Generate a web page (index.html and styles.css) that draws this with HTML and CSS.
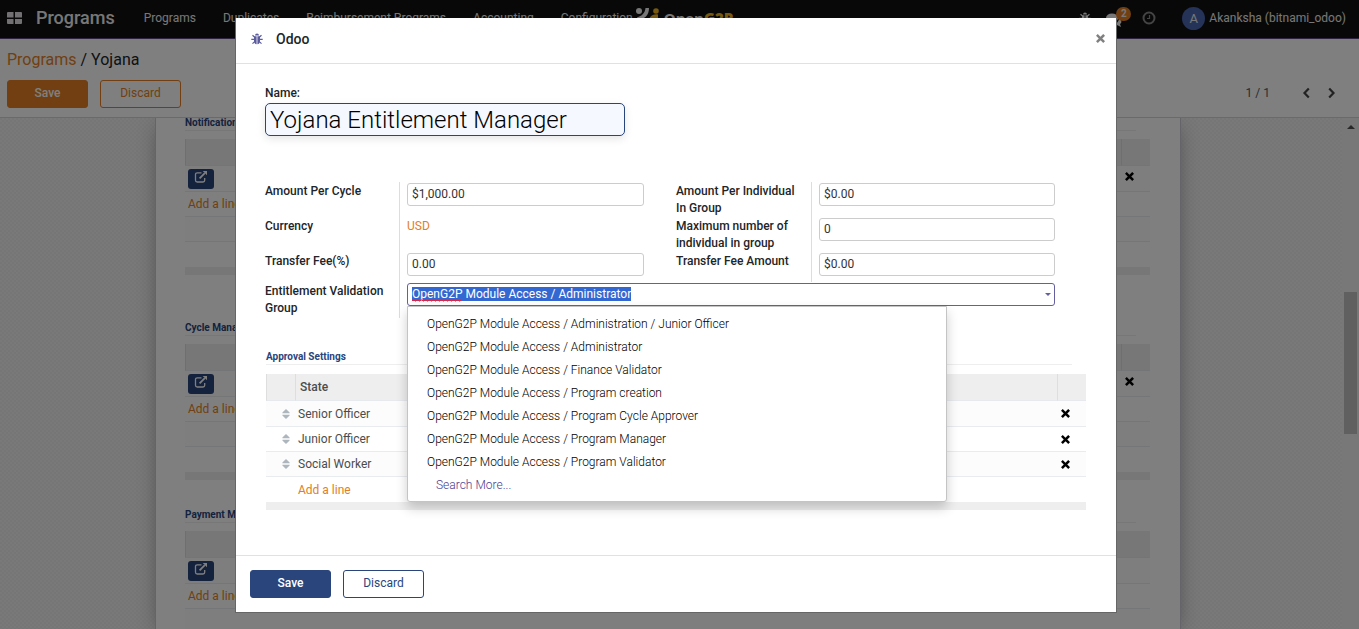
FILE: index.html
```html
<!DOCTYPE html>
<html lang="en">
<head>
<meta charset="utf-8">
<title>Odoo - Yojana</title>
<link rel="stylesheet" href="styles.css">
</head>
<body>
<svg class="sprite" aria-hidden="true">
  <symbol id="bug" viewBox="0 0 12 12">
    <path d="M4 2.600a2 2 0 0 1 4 0z"/>
    <path d="M3 3.300h2.600v8C4 11.300 3 9.800 3 8zM6.400 3.300H9V8c0 1.800-1 3.300-2.600 3.300z"/>
    <path d="M1.500 2.200l2 1.800M10.500 2.200l-2 1.800M.3 6.400h3M11.700 6.400h-3M1.500 10.600l2.200-2M10.500 10.600l-2.200-2" fill="none" stroke="currentColor" stroke-width="1.200"/>
  </symbol>
  <symbol id="times" viewBox="0 0 10 10">
    <path d="M2 2l6 6M8 2L2 8" fill="none" stroke="currentColor" stroke-width="2.800" stroke-linecap="square"/>
  </symbol>
  <symbol id="external" viewBox="0 0 14 12">
    <path d="M7.500 1.800H3.200A1.700 1.700 0 0 0 1.500 3.500v5.800A1.700 1.700 0 0 0 3.200 11h5.800a1.700 1.700 0 0 0 1.700-1.700V7" fill="none" stroke="currentColor" stroke-width="1.300"/>
    <path d="M5.600 7.300l5.200-5.200" stroke="currentColor" stroke-width="1.800"/>
    <path d="M8.700 0H13v4.300z"/>
  </symbol>
  <symbol id="sort" viewBox="0 0 8 10">
    <path d="M4 0l3.600 3.500v.7H.4v-.7zM4 10L.4 6.500v-.7h7.200v.7z"/>
  </symbol>
  <symbol id="chevron" viewBox="0 0 8 12">
    <path d="M6.300 1.500L2 6l4.300 4.500" fill="none" stroke="currentColor" stroke-width="2.200"/>
  </symbol>
</svg>

<div class="app">
  <header class="navbar">
    <button class="apps" aria-label="Home menu"><svg viewBox="0 0 15 12"><path d="M0 1a1 1 0 0 1 1-1h5.500v5.500H0zM8 0h6a1 1 0 0 1 1 1v4.500H8zM0 7h6.500v5H1a1 1 0 0 1-1-1zM8 7h7v4a1 1 0 0 1-1 1H8z"/></svg></button>
    <a class="brand" href="#">Programs</a>
    <nav class="menu">
      <a href="#">Programs</a>
      <a href="#">Duplicates</a>
      <a href="#">Reimbursement Programs</a>
      <a href="#">Accounting</a>
      <a href="#">Configuration</a>
    </nav>
    <a class="logo" href="#">
      <svg viewBox="0 0 24 20" aria-hidden="true"><circle cx="3" cy="3" r="3" fill="#eee"/><path d="M9.500 0H13c0 7-4 11-12 13V9.500C6 8 9 5 9.500 0z" fill="#eee"/><circle cx="20" cy="3" r="2.800" fill="#eeb41e"/><path d="M22 10V6.500c-6-1-10 3-10 10h4c0-4 2-6 6-6.500z" fill="#eeb41e"/></svg>
      <span>Open<b>G2P</b></span>
    </a>
    <div class="tray">
      <button aria-label="Debug"><svg class="tray-bug"><use href="#bug"/></svg></button>
      <button class="messages" aria-label="Messages"><svg viewBox="0 0 16 14"><ellipse cx="6" cy="5" rx="6" ry="4.500"/><path d="M2 8l-1 4 4-3zM13 5c3 2 3 5 1 6l1 3-4-2-4-1c4 0 6-3 6-6z"/></svg><span class="badge">2</span></button>
      <button class="activities" aria-label="Activities"><svg viewBox="0 0 14 14"><circle cx="7" cy="7" r="5.500" stroke-width="2"/><path d="M7.500 4v3.500H5" stroke-width="1.200"/></svg></button>
      <button class="user"><span class="avatar">A</span>Akanksha (bitnami_odoo)</button>
    </div>
  </header>

  <section class="control-panel">
    <div class="crumbs"><a href="#">Programs</a> / Yojana</div>
    <div class="actions">
      <div class="buttons page-buttons"><button class="btn btn-fill">Save</button><button class="btn">Discard</button></div>
      <div class="pager"><span>1 / 1</span>
        <button aria-label="Previous"><svg><use href="#chevron"/></svg></button>
        <button aria-label="Next"><svg class="flip"><use href="#chevron"/></svg></button>
      </div>
    </div>
  </section>

  <main class="content">
    <div class="canvas">
      <div class="sheet">
        <section class="managers spaced">
          <h2 class="heading">Notification Managers</h2>
          <table class="list">
            <thead><tr><th></th><th class="end"></th></tr></thead>
            <tbody>
              <tr><td><button class="open" aria-label="Open"><svg><use href="#external"/></svg></button></td><td class="end"><button class="remove" aria-label="Delete"><svg><use href="#times"/></svg></button></td></tr>
              <tr><td colspan="2"><a href="#">Add a line</a></td></tr>
              <tr><td colspan="2"></td></tr>
              <tr><td colspan="2"></td></tr>
            </tbody>
            <tfoot><tr><td colspan="2"></td></tr></tfoot>
          </table>
        </section>
        <section class="managers">
          <h2 class="heading">Cycle Managers</h2>
          <table class="list">
            <thead><tr><th></th><th class="end"></th></tr></thead>
            <tbody>
              <tr><td><button class="open" aria-label="Open"><svg><use href="#external"/></svg></button></td><td class="end"><button class="remove" aria-label="Delete"><svg><use href="#times"/></svg></button></td></tr>
              <tr><td colspan="2"><a href="#">Add a line</a></td></tr>
              <tr><td colspan="2"></td></tr>
              <tr><td colspan="2"></td></tr>
            </tbody>
            <tfoot><tr><td colspan="2"></td></tr></tfoot>
          </table>
        </section>
        <section class="managers payment">
          <h2 class="heading">Payment Managers</h2>
          <table class="list">
            <thead><tr><th></th></tr></thead>
            <tbody>
              <tr><td><button class="open" aria-label="Open"><svg><use href="#external"/></svg></button></td></tr>
              <tr><td><a href="#">Add a line</a></td></tr>
              <tr><td></td></tr>
            </tbody>
          </table>
        </section>
      </div>
    </div>
    <div class="scrollbar" aria-hidden="true"><span class="arrow"></span><span class="thumb"></span></div>
  </main>
</div>

<div class="backdrop">
  <div class="modal" role="dialog" aria-modal="true" aria-labelledby="title">
    <header class="modal-head">
      <svg class="debug"><use href="#bug"/></svg>
      <h1 id="title">Odoo</h1>
      <button class="close" aria-label="Close"><svg><use href="#times"/></svg></button>
    </header>
    <div class="modal-body">
      <label class="name-label" for="name">Name:</label>
      <input class="name" id="name" value="Yojana Entitlement Manager">

      <div class="groups">
        <div class="group">
          <div class="row"><label for="cycle">Amount Per Cycle</label><div class="value"><input id="cycle" value="$1,000.00"></div></div>
          <div class="row"><span class="label">Currency</span><div class="value"><a href="#">USD</a></div></div>
          <div class="row short"><label for="fee">Transfer Fee(%)</label><div class="value"><input id="fee" value="0.00"></div></div>
        </div>
        <div class="group">
          <div class="row"><label for="individual">Amount Per Individual In Group</label><div class="value"><input id="individual" value="$0.00"></div></div>
          <div class="row"><label for="maximum">Maximum number of individual in group</label><div class="value"><input id="maximum" value="0"></div></div>
          <div class="row short"><label for="feeamount">Transfer Fee Amount</label><div class="value"><input id="feeamount" value="$0.00"></div></div>
        </div>
      </div>
      <div class="row wide">
        <label for="validation">Entitlement Validation Group</label>
        <div class="value combo">
          <input id="validation" role="combobox" aria-expanded="true" aria-controls="options" value="OpenG2P Module Access / Administrator">
          <span class="caret"></span>
          <svg class="squiggle" aria-hidden="true"><defs><pattern id="wave" width="4" height="3" patternUnits="userSpaceOnUse"><path d="M0 2l1-1h1l1 1h1" fill="none" stroke="#e0203c"/></pattern></defs><rect width="100%" height="3" fill="url(#wave)"/></svg>
          <ul class="options" id="options" role="listbox">
            <li role="option">OpenG2P Module Access / Administration / Junior Officer</li>
            <li role="option">OpenG2P Module Access / Administrator</li>
            <li role="option">OpenG2P Module Access / Finance Validator</li>
            <li role="option">OpenG2P Module Access / Program creation</li>
            <li role="option">OpenG2P Module Access / Program Cycle Approver</li>
            <li role="option">OpenG2P Module Access / Program Manager</li>
            <li role="option">OpenG2P Module Access / Program Validator</li>
            <li role="option" class="more">Search More...</li>
          </ul>
        </div>
      </div>

      <section class="approval">
        <h2 class="heading">Approval Settings</h2>
        <table class="list">
          <thead><tr><th class="handle"></th><th>State</th><th class="end"></th></tr></thead>
          <tbody>
            <tr><td class="handle"><svg class="sort"><use href="#sort"/></svg></td><td>Senior Officer</td><td class="end"><button class="remove" aria-label="Delete"><svg><use href="#times"/></svg></button></td></tr>
            <tr><td class="handle"><svg class="sort"><use href="#sort"/></svg></td><td>Junior Officer</td><td class="end"><button class="remove" aria-label="Delete"><svg><use href="#times"/></svg></button></td></tr>
            <tr><td class="handle"><svg class="sort"><use href="#sort"/></svg></td><td>Social Worker</td><td class="end"><button class="remove" aria-label="Delete"><svg><use href="#times"/></svg></button></td></tr>
            <tr><td class="handle"></td><td colspan="2"><a href="#">Add a line</a></td></tr>
          </tbody>
          <tfoot><tr><td colspan="3"></td></tr></tfoot>
        </table>
      </section>
    </div>
    <footer class="modal-foot buttons"><button class="btn btn-fill">Save</button><button class="btn">Discard</button></footer>
  </div>
</div>
<script src="main.js"></script>
</body>
</html>
```
FILE: main.js
```js
const field = document.getElementById('validation');
field.focus({ preventScroll: true });
field.select();
```
FILE: styles.css
```css
* { box-sizing: border-box; }
body {
  margin: 0;
  overflow: hidden;
  font: 12px/18px Roboto, "Liberation Sans", sans-serif;
  color: #4c4c4c;
}
a { color: #e27e24; text-decoration: none; }
button { font: inherit; color: inherit; background: none; border: 0; padding: 0; }
input { font: inherit; }
svg { display: block; fill: currentColor; }
.sprite { position: absolute; width: 0; height: 0; }

.app { display: flex; flex-direction: column; height: 100vh; background: #fff; }

/* Top bar */
.navbar {
  display: flex;
  align-items: center;
  flex: none;
  height: 39px;
  padding: 0 13px 2px 7px;
  background: #111;
  border-bottom: 1px solid #5a4a80;
  color: #eee;
}
.navbar a { color: #eee; }
.apps svg { width: 15px; height: 12px; color: #e6e0e6; }
.navbar .brand { margin: 0 29px 0 14px; font-size: 18px; font-weight: 500; }
.menu { display: flex; gap: 27px; }
.logo { display: flex; align-items: flex-start; gap: 4px; margin-left: 3px; }
.logo svg { width: 24px; height: 20px; }
.logo span { font: 700 15px/20px "Open Sans", sans-serif; }
.navbar .logo b { color: #eeb41e; }
.tray { display: flex; align-items: center; margin-left: auto; }
.tray-bug { width: 12px; height: 12px; }
.messages { position: relative; margin-left: 15px; padding-top: 3px; }
.messages svg { width: 16px; height: 14px; }
.badge {
  position: absolute;
  left: 10px;
  top: -3px;
  width: 15px;
  border-radius: 8px;
  background: #e27e24;
  font-size: 10px;
  font-weight: 700;
  line-height: 14px;
}
.activities { margin: 0 26px 0 20px; color: #888; }
.activities svg { width: 14px; height: 14px; fill: none; stroke: currentColor; }
.user { display: flex; align-items: center; gap: 4px; }
.avatar { width: 23px; border-radius: 50%; background: #4a66b0; font-size: 13px; line-height: 23px; text-align: center; }

/* Control panel */
.control-panel { flex: none; height: 79px; padding: 10px 23px 9px 7px; border-bottom: 1px solid #d4d4d8; }
.crumbs { font-size: 16px; line-height: 21px; color: #212529; }
.actions { display: flex; justify-content: space-between; margin-top: 10px; }
.pager { display: flex; align-items: center; padding-bottom: 3px; color: #4c5a6c; }
.pager button { margin-left: 16px; color: #444; }
.pager span { margin-right: 16px; }
.pager svg { width: 9px; height: 12px; }
.flip { transform: scaleX(-1); }

.buttons { display: flex; gap: 12px; }
.btn { width: 81px; height: 28px; padding-bottom: 2px; border: 1px solid #29457c; border-radius: 3px; background: #fff; color: #29457c; }
.btn-fill { background: #29457c; color: #fff; font-weight: 500; }
.page-buttons .btn { border-color: #e27e24; color: #e27e24; }
.page-buttons .btn-fill { background: #e27e24; color: #fff; }

/* Page form */
.content { display: flex; flex: 1; min-height: 0; overflow: hidden; }
.canvas {
  flex: 1;
  padding: 0 161px 0 155px;
  background: repeating-conic-gradient(#f2f2f2 0 25%, #ececec 0 50%) 0 0 / 4px 4px;
}
.sheet { height: 100%; padding: 0 30px 0 29px; overflow: hidden; background: #fff; border: 1px solid #c8c8d2; border-width: 0 1px; box-shadow: 0 5px 20px -5px #888; }
.managers { margin-bottom: 30px; }
.managers.spaced { margin-bottom: 48px; }
.heading { margin: 0 14px 0 0; padding-bottom: 3px; border-bottom: 1px solid #eee; font-size: 10px; font-weight: 700; line-height: 9px; color: #29457c; white-space: nowrap; }

/* Lists */
.list { width: 100%; margin-top: 8px; border-collapse: separate; border-spacing: 0; }
.list th { height: 27px; padding: 0 4px; background: #eee; border-bottom: 1px solid #e6eaee; border-left: 1px solid #dedede; text-align: left; font-weight: 500; }
.list tbody td { height: 25px; padding: 0 3px; border-bottom: 1px solid #e9ecef; }
.list tbody tr:first-child td { height: 26px; }
.list tbody tr:last-child td { border-bottom: 0; }
.list tbody tr:nth-child(odd) td { background: #fcfcfc; }
.list tfoot td { height: 8px; padding: 0; background: #eee; }
.list .end { width: 29px; }
.list .handle { width: 29px; }
.open { display: block; padding: 2px 6px 6px; border-radius: 3px; background: #29457c; color: #fff; }
.open svg { width: 14px; height: 12px; }
.remove { display: block; padding: 0 1px; color: #000; }
.remove svg { width: 9px; height: 9px; }
.managers .remove { padding-bottom: 4px; }
.sort { width: 8px; height: 10px; margin-left: 13px; color: #adb5bd; }

/* Scrollbar */
.scrollbar { display: flex; flex-direction: column; align-items: center; width: 17px; background: #f1f1f1; }
.arrow { margin-top: 7px; border: 4px solid transparent; border-top: 0; border-bottom-color: #505050; }
.thumb { width: 13px; height: 142px; margin-top: 163px; background: #c1c1c1; }

/* Dialog */
.backdrop { position: fixed; inset: 0; padding: 18px 7px 0 0; background: rgba(0, 0, 0, .5); }
.modal { max-width: 882px; margin: 0 auto; background: #fff; background-clip: padding-box; border: 1px solid #666; border-top: 0; }
.modal-head { display: flex; align-items: center; height: 46px; padding: 0 11px 4px 15px; border-bottom: 1px solid #dee2e6; }
.debug { width: 12px; height: 12px; color: #5c5c9c; }
.modal-head h1 { margin: 0 auto 0 13px; font-size: 14px; font-weight: 500; color: #212529; }
.close { color: #808080; }
.close svg { width: 9px; height: 9px; }
.modal-body { padding: 20px 30px 45px 29px; }
.name-label { display: block; color: #212529; font-weight: 500; }
.name { display: block; width: 360px; height: 33px; margin-top: 1px; padding: 0 4px; border: 1px solid #29457c; border-radius: 5px; background: #f5f8ff; box-shadow: 0 3px 8px rgba(0, 0, 0, .1); color: #000; font-size: 24px; font-weight: 300; }

.groups { display: grid; grid-template-columns: 1fr 1fr; gap: 32px; margin: 46px 31px 0 0; }
.row { display: grid; grid-template-columns: 135px 1fr; height: 35px; }
.group + .group .row { grid-template-columns: 136px 1fr; }
.row.short { height: 30px; }
.row.wide { height: 36px; margin-right: 31px; }
.row > label, .row > .label { padding: 1px 8px 0 0; border-right: 1px solid #ddd; color: #212529; font-weight: 500; line-height: 17px; }
.value { padding: 1px 0 0 7px; line-height: 17px; }
.value input { display: block; width: 100%; height: 23px; padding: 0 4px 2px; border: 1px solid #ccc; border-radius: 3px; color: #333; outline: 0; }
.combo { position: relative; }
.combo input { border-color: #6460a0; }
.combo input::selection { background: #3367d1; color: #fff; }
.caret { position: absolute; right: 4px; top: 11px; border: 3px solid transparent; border-top-color: #6460a0; border-bottom: 0; }
.squiggle { position: absolute; left: 12px; top: 17px; width: 49px; height: 3px; }
.options { position: absolute; left: 7px; top: 24px; width: 540px; margin: 0; padding: 6px 0 4px; list-style: none; background: #fff; border: 1px solid #c4c4c4; border-radius: 0 0 3px 3px; box-shadow: 0 6px 12px rgba(0, 0, 0, .2); font-weight: 300; line-height: 23px; color: #000; }
.options li { padding: 0 19px; }
.options .more { padding-left: 28px; color: #483c90; }

.approval { margin: 34px 0 0 1px; }
.approval .list { margin-top: 9px; }
.modal-foot { padding: 14px; border-top: 1px solid #dee2e6; }
```
